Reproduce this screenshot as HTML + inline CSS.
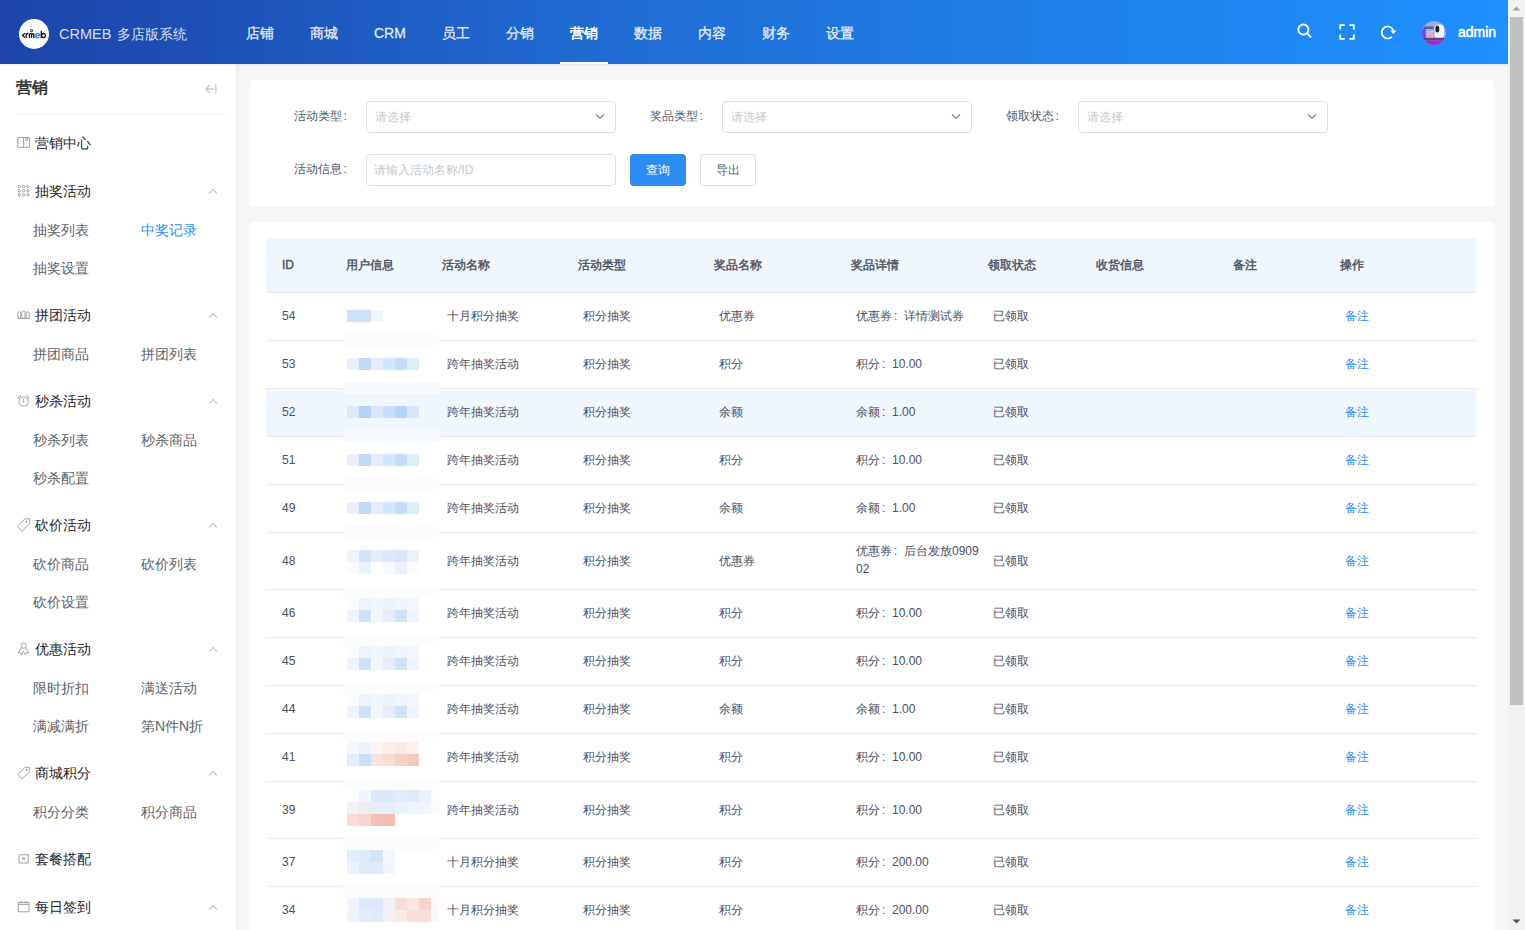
<!DOCTYPE html><html><head><meta charset="utf-8"><title>CRMEB</title><style>
*{margin:0;padding:0;box-sizing:border-box}
html,body{width:1525px;height:930px;overflow:hidden;background:#f5f6f8;font-family:"Liberation Sans", sans-serif}
.t{position:absolute;white-space:nowrap}
.a{position:absolute}
</style></head><body>
<div class="a" style="left:0;top:0;width:1508px;height:64px;background:linear-gradient(90deg,#1d45ab 0px,#1d50b6 200px,#206ad2 580px,#1f7ee6 1000px,#1e90ff 1508px)"></div>
<div class="a" style="left:19px;top:19px;width:30px;height:30px;border-radius:50%;background:#fff"></div>
<svg class="a" style="left:0;top:0" width="60" height="60" viewBox="0 0 60 60"><g fill="none" stroke="#111" stroke-width="1.3"><path d="M24.9 33.3L22.5 35.4 24.9 37.5"/><path d="M26.2 37.9V33.2M26.2 35Q26.9 33.3 28.3 33.5"/><path d="M29.4 37.9V33.2M29.4 34.3Q31.6 32.6 31.6 34.8V37.9M31.6 34.8Q33.7 32.6 33.8 34.8V37.9"/><circle cx="31.5" cy="30.6" r="1.1" stroke-width="1"/><path d="M35.9 35.5H39.7A2.1 2.2 0 1 0 39.1 37.1" stroke="#2d8cf0"/><path d="M41.3 30.8V37.9"/><ellipse cx="43.5" cy="35.6" rx="2" ry="2.1"/></g></svg>
<div class="t" style="left:59px;top:23.0px;font-size:14px;line-height:22px;color:rgba(255,255,255,0.82);font-weight:normal;"><span style="font-size:14.5px;margin-right:2px">CRMEB</span> 多店版系统</div>
<div class="t" style="left:246px;top:22.0px;font-size:14px;line-height:22px;color:rgba(255,255,255,0.8);font-weight:normal;-webkit-text-stroke:0.35px rgba(255,255,255,0.8)">店铺</div>
<div class="t" style="left:310px;top:22.0px;font-size:14px;line-height:22px;color:rgba(255,255,255,0.8);font-weight:normal;-webkit-text-stroke:0.35px rgba(255,255,255,0.8)">商城</div>
<div class="t" style="left:374px;top:22.0px;font-size:14px;line-height:22px;color:rgba(255,255,255,0.8);font-weight:normal;-webkit-text-stroke:0.35px rgba(255,255,255,0.8)">CRM</div>
<div class="t" style="left:442px;top:22.0px;font-size:14px;line-height:22px;color:rgba(255,255,255,0.8);font-weight:normal;-webkit-text-stroke:0.35px rgba(255,255,255,0.8)">员工</div>
<div class="t" style="left:506px;top:22.0px;font-size:14px;line-height:22px;color:rgba(255,255,255,0.8);font-weight:normal;-webkit-text-stroke:0.35px rgba(255,255,255,0.8)">分销</div>
<div class="t" style="left:570px;top:22.0px;font-size:14px;line-height:22px;color:#fff;font-weight:normal;-webkit-text-stroke:0.45px #fff">营销</div>
<div class="t" style="left:634px;top:22.0px;font-size:14px;line-height:22px;color:rgba(255,255,255,0.8);font-weight:normal;-webkit-text-stroke:0.35px rgba(255,255,255,0.8)">数据</div>
<div class="t" style="left:698px;top:22.0px;font-size:14px;line-height:22px;color:rgba(255,255,255,0.8);font-weight:normal;-webkit-text-stroke:0.35px rgba(255,255,255,0.8)">内容</div>
<div class="t" style="left:762px;top:22.0px;font-size:14px;line-height:22px;color:rgba(255,255,255,0.8);font-weight:normal;-webkit-text-stroke:0.35px rgba(255,255,255,0.8)">财务</div>
<div class="t" style="left:826px;top:22.0px;font-size:14px;line-height:22px;color:rgba(255,255,255,0.8);font-weight:normal;-webkit-text-stroke:0.35px rgba(255,255,255,0.8)">设置</div>
<div class="a" style="left:560px;top:62px;width:48px;height:2px;background:#fff"></div>
<svg class="a" style="left:1296px;top:23px" width="18" height="18" viewBox="0 0 18 18"><circle cx="7.4" cy="6.6" r="5.1" fill="none" stroke="#fff" stroke-width="1.8"/><line x1="11" y1="10.3" x2="14.6" y2="13.9" stroke="#fff" stroke-width="2" stroke-linecap="round"/></svg>
<svg class="a" style="left:1338px;top:23px" width="18" height="18" viewBox="0 0 18 18"><path d="M2.2 6.5V2.2h4.5M11.3 2.2h4.5v4.5M15.8 11.5v4.3h-4.5M6.7 15.8H2.2v-4.3" fill="none" stroke="#fff" stroke-width="1.8"/></svg>
<svg class="a" style="left:1379px;top:24px" width="18" height="18" viewBox="0 0 18 18"><path d="M14.4 6.6A6 6 0 1 0 12.9 12.8" fill="none" stroke="#fff" stroke-width="1.7"/><path d="M11.4 6.6h6L14.4 10z" fill="#fff"/></svg>
<svg class="a" style="left:1422px;top:21px" width="24" height="24" viewBox="0 0 24 24"><defs><clipPath id="avc"><circle cx="12" cy="12" r="12"/></clipPath></defs><g clip-path="url(#avc)"><rect width="24" height="24" fill="#9cace8"/><rect x="0" y="7" width="3.8" height="10" fill="#7848e6"/><rect x="2" y="5.5" width="9.5" height="2.5" fill="#3c3c78" opacity="0.7"/><rect x="4.5" y="10" width="7" height="1.6" fill="#f2b4d2"/><rect x="4.5" y="12.6" width="7" height="1.6" fill="#f2b4d2"/><rect x="4.5" y="15.2" width="7" height="1.4" fill="#f2b4d2"/><rect x="12.5" y="3.5" width="9.5" height="14" rx="4" fill="#f6f6fa"/><ellipse cx="15.3" cy="8" rx="2" ry="3.5" fill="#222"/><rect x="0" y="16.8" width="24" height="2.4" fill="#50506a"/><rect x="0" y="19.2" width="24" height="5" fill="#a626c8"/></g></svg>
<div class="t" style="left:1458px;top:21.0px;font-size:14px;line-height:22px;color:#fff;font-weight:normal;-webkit-text-stroke:0.5px #fff">admin</div>
<div class="a" style="left:0;top:64px;width:236px;height:866px;background:#fff"></div>
<div class="a" style="left:236px;top:64px;width:6px;height:866px;background:linear-gradient(90deg,#eceef1,#f5f6f9)"></div>
<div class="a" style="left:0;top:64px;width:1508px;height:3px;background:linear-gradient(180deg,rgba(0,0,0,0.06),rgba(0,0,0,0))"></div>
<div class="t" style="left:16px;top:76.0px;font-size:16px;line-height:24px;color:#303133;font-weight:normal;-webkit-text-stroke:0.55px #303133">营销</div>
<svg class="a" style="left:203px;top:82px" width="15" height="14" viewBox="0 0 15 14"><path d="M6.5 3.2L2.8 7l3.7 3.8M2.8 7h8M12.8 2.5v9" fill="none" stroke="#c3c7cf" stroke-width="1.3"/></svg>
<div class="a" style="left:16px;top:114px;width:210px;height:1px;background:#eef0f4"></div>
<div class="t" style="left:35px;top:132.0px;font-size:14px;line-height:22px;color:#1f2329;font-weight:normal;">营销中心</div>
<svg class="a" style="left:16px;top:135px" width="16" height="16" viewBox="0 0 16 16"><path d="M1.8 2.5h11.6v9.8H1.8z M7.6 2.5v9.8 M9.8 2.5v3.2l0.9-0.8 0.9 0.8V2.5" fill="none" stroke="#92969e" stroke-width="0.9"/></svg>
<div class="t" style="left:35px;top:180.0px;font-size:14px;line-height:22px;color:#1f2329;font-weight:normal;">抽奖活动</div>
<svg class="a" style="left:16px;top:183px" width="16" height="16" viewBox="0 0 16 16"><circle cx="3.2" cy="3.6" r="1.2" fill="none" stroke="#92969e" stroke-width="0.9"/><circle cx="7.55" cy="3.6" r="1.2" fill="none" stroke="#92969e" stroke-width="0.9"/><circle cx="11.899999999999999" cy="3.6" r="1.2" fill="none" stroke="#92969e" stroke-width="0.9"/><circle cx="3.2" cy="7.699999999999999" r="1.2" fill="none" stroke="#92969e" stroke-width="0.9"/><circle cx="7.55" cy="7.699999999999999" r="1.2" fill="none" stroke="#92969e" stroke-width="0.9"/><circle cx="11.899999999999999" cy="7.699999999999999" r="1.2" fill="none" stroke="#92969e" stroke-width="0.9"/><circle cx="3.2" cy="11.799999999999999" r="1.2" fill="none" stroke="#92969e" stroke-width="0.9"/><circle cx="7.55" cy="11.799999999999999" r="1.2" fill="none" stroke="#92969e" stroke-width="0.9"/><circle cx="11.899999999999999" cy="11.799999999999999" r="1.2" fill="none" stroke="#92969e" stroke-width="0.9"/></svg>
<svg class="a" style="left:208px;top:188px" width="10" height="7" viewBox="0 0 10 7"><path d="M1 5.5L5 1.5 9 5.5" fill="none" stroke="#c5c8ce" stroke-width="1.1"/></svg>
<div class="t" style="left:35px;top:304.0px;font-size:14px;line-height:22px;color:#1f2329;font-weight:normal;">拼团活动</div>
<svg class="a" style="left:16px;top:307px" width="16" height="16" viewBox="0 0 16 16"><rect x="1.8" y="4.8" width="3" height="6.6" rx="1.5" fill="none" stroke="#92969e" stroke-width="0.9"/><rect x="5.9" y="3.9" width="3.2" height="7.5" rx="1.6" fill="none" stroke="#92969e" stroke-width="0.9"/><rect x="10.2" y="4.8" width="3" height="6.6" rx="1.5" fill="none" stroke="#92969e" stroke-width="0.9"/><path d="M1.5 11.6H13.5" fill="none" stroke="#92969e" stroke-width="0.9"/></svg>
<svg class="a" style="left:208px;top:312px" width="10" height="7" viewBox="0 0 10 7"><path d="M1 5.5L5 1.5 9 5.5" fill="none" stroke="#c5c8ce" stroke-width="1.1"/></svg>
<div class="t" style="left:35px;top:390.0px;font-size:14px;line-height:22px;color:#1f2329;font-weight:normal;">秒杀活动</div>
<svg class="a" style="left:16px;top:393px" width="16" height="16" viewBox="0 0 16 16"><rect x="3" y="4.2" width="9.2" height="8.8" rx="3.5" fill="none" stroke="#92969e" stroke-width="0.9"/><path d="M2.2 5.6Q2.2 2.6 5 2.6 M13 5.6Q13 2.6 10.2 2.6 M7.6 5.8V9.6" fill="none" stroke="#92969e" stroke-width="0.9"/></svg>
<svg class="a" style="left:208px;top:398px" width="10" height="7" viewBox="0 0 10 7"><path d="M1 5.5L5 1.5 9 5.5" fill="none" stroke="#c5c8ce" stroke-width="1.1"/></svg>
<div class="t" style="left:35px;top:514.0px;font-size:14px;line-height:22px;color:#1f2329;font-weight:normal;">砍价活动</div>
<svg class="a" style="left:16px;top:517px" width="16" height="16" viewBox="0 0 16 16"><path d="M1.3 9.4L8.9 1.8H13.8V6.6L6.2 14.2Z" fill="none" stroke="#92969e" stroke-width="0.9"/><circle cx="10.4" cy="4.6" r="0.7" fill="none" stroke="#92969e" stroke-width="0.9"/></svg>
<svg class="a" style="left:208px;top:522px" width="10" height="7" viewBox="0 0 10 7"><path d="M1 5.5L5 1.5 9 5.5" fill="none" stroke="#c5c8ce" stroke-width="1.1"/></svg>
<div class="t" style="left:35px;top:638.0px;font-size:14px;line-height:22px;color:#1f2329;font-weight:normal;">优惠活动</div>
<svg class="a" style="left:16px;top:641px" width="16" height="16" viewBox="0 0 16 16"><circle cx="7.5" cy="4.6" r="2.7" fill="none" stroke="#92969e" stroke-width="0.9"/><path d="M5.4 6.8L2.3 11.5H4.6L5.6 13.8L7.5 10.3L9.4 13.8L10.4 11.5H12.7L9.6 6.8" fill="none" stroke="#92969e" stroke-width="0.9"/></svg>
<svg class="a" style="left:208px;top:646px" width="10" height="7" viewBox="0 0 10 7"><path d="M1 5.5L5 1.5 9 5.5" fill="none" stroke="#c5c8ce" stroke-width="1.1"/></svg>
<div class="t" style="left:35px;top:762.0px;font-size:14px;line-height:22px;color:#1f2329;font-weight:normal;">商城积分</div>
<svg class="a" style="left:16px;top:765px" width="16" height="16" viewBox="0 0 16 16"><path d="M1.8 9.6L9.2 2.2H13.6V6.6L6.2 14Z" fill="none" stroke="#92969e" stroke-width="0.9"/><circle cx="10.6" cy="4.9" r="0.7" fill="none" stroke="#92969e" stroke-width="0.9"/></svg>
<svg class="a" style="left:208px;top:770px" width="10" height="7" viewBox="0 0 10 7"><path d="M1 5.5L5 1.5 9 5.5" fill="none" stroke="#c5c8ce" stroke-width="1.1"/></svg>
<div class="t" style="left:35px;top:848.0px;font-size:14px;line-height:22px;color:#1f2329;font-weight:normal;">套餐搭配</div>
<svg class="a" style="left:16px;top:851px" width="16" height="16" viewBox="0 0 16 16"><path d="M3 3.8h9.2v8.2H3z" fill="none" stroke="#92969e" stroke-width="0.9"/><rect x="6" y="6.6" width="3.2" height="1.8" fill="#92969e"/></svg>
<div class="t" style="left:35px;top:896.0px;font-size:14px;line-height:22px;color:#1f2329;font-weight:normal;">每日签到</div>
<svg class="a" style="left:16px;top:899px" width="16" height="16" viewBox="0 0 16 16"><path d="M2.3 3.3h10.7v9.5H2.3z M2.3 5.4h10.7 M5 2v2.5 M10.3 2v2.5" fill="none" stroke="#92969e" stroke-width="0.9"/></svg>
<svg class="a" style="left:208px;top:904px" width="10" height="7" viewBox="0 0 10 7"><path d="M1 5.5L5 1.5 9 5.5" fill="none" stroke="#c5c8ce" stroke-width="1.1"/></svg>
<div class="t" style="left:33px;top:219.0px;font-size:14px;line-height:22px;color:#606266;font-weight:normal;">抽奖列表</div>
<div class="t" style="left:141px;top:219.0px;font-size:14px;line-height:22px;color:#2d8cf0;font-weight:normal;">中奖记录</div>
<div class="t" style="left:33px;top:257.0px;font-size:14px;line-height:22px;color:#606266;font-weight:normal;">抽奖设置</div>
<div class="t" style="left:33px;top:343.0px;font-size:14px;line-height:22px;color:#606266;font-weight:normal;">拼团商品</div>
<div class="t" style="left:141px;top:343.0px;font-size:14px;line-height:22px;color:#606266;font-weight:normal;">拼团列表</div>
<div class="t" style="left:33px;top:429.0px;font-size:14px;line-height:22px;color:#606266;font-weight:normal;">秒杀列表</div>
<div class="t" style="left:141px;top:429.0px;font-size:14px;line-height:22px;color:#606266;font-weight:normal;">秒杀商品</div>
<div class="t" style="left:33px;top:467.0px;font-size:14px;line-height:22px;color:#606266;font-weight:normal;">秒杀配置</div>
<div class="t" style="left:33px;top:553.0px;font-size:14px;line-height:22px;color:#606266;font-weight:normal;">砍价商品</div>
<div class="t" style="left:141px;top:553.0px;font-size:14px;line-height:22px;color:#606266;font-weight:normal;">砍价列表</div>
<div class="t" style="left:33px;top:591.0px;font-size:14px;line-height:22px;color:#606266;font-weight:normal;">砍价设置</div>
<div class="t" style="left:33px;top:677.0px;font-size:14px;line-height:22px;color:#606266;font-weight:normal;">限时折扣</div>
<div class="t" style="left:141px;top:677.0px;font-size:14px;line-height:22px;color:#606266;font-weight:normal;">满送活动</div>
<div class="t" style="left:33px;top:715.0px;font-size:14px;line-height:22px;color:#606266;font-weight:normal;">满减满折</div>
<div class="t" style="left:141px;top:715.0px;font-size:14px;line-height:22px;color:#606266;font-weight:normal;">第N件N折</div>
<div class="t" style="left:33px;top:801.0px;font-size:14px;line-height:22px;color:#606266;font-weight:normal;">积分分类</div>
<div class="t" style="left:141px;top:801.0px;font-size:14px;line-height:22px;color:#606266;font-weight:normal;">积分商品</div>
<div class="a" style="left:250px;top:80px;width:1244px;height:126px;background:#fff;border-radius:4px"></div>
<div class="t" style="left:294px;top:105.5px;font-size:12px;line-height:20px;color:#515a6e;font-weight:normal;">活动类型<span style="margin-left:1.5px">:</span></div>
<div class="a" style="left:366px;top:101px;width:250px;height:32px;border:1px solid #dcdee2;border-radius:4px"></div>
<div class="t" style="left:375px;top:106.5px;font-size:12px;line-height:20px;color:#c5c8ce;font-weight:normal;">请选择</div>
<svg class="a" style="left:595px;top:113px" width="10" height="7" viewBox="0 0 10 7"><path d="M1 1.5L5 5.5 9 1.5" fill="none" stroke="#808695" stroke-width="1.2"/></svg>
<div class="t" style="left:650px;top:105.5px;font-size:12px;line-height:20px;color:#515a6e;font-weight:normal;">奖品类型<span style="margin-left:1.5px">:</span></div>
<div class="a" style="left:722px;top:101px;width:250px;height:32px;border:1px solid #dcdee2;border-radius:4px"></div>
<div class="t" style="left:731px;top:106.5px;font-size:12px;line-height:20px;color:#c5c8ce;font-weight:normal;">请选择</div>
<svg class="a" style="left:951px;top:113px" width="10" height="7" viewBox="0 0 10 7"><path d="M1 1.5L5 5.5 9 1.5" fill="none" stroke="#808695" stroke-width="1.2"/></svg>
<div class="t" style="left:1006px;top:105.5px;font-size:12px;line-height:20px;color:#515a6e;font-weight:normal;">领取状态<span style="margin-left:1.5px">:</span></div>
<div class="a" style="left:1078px;top:101px;width:250px;height:32px;border:1px solid #dcdee2;border-radius:4px"></div>
<div class="t" style="left:1087px;top:106.5px;font-size:12px;line-height:20px;color:#c5c8ce;font-weight:normal;">请选择</div>
<svg class="a" style="left:1307px;top:113px" width="10" height="7" viewBox="0 0 10 7"><path d="M1 1.5L5 5.5 9 1.5" fill="none" stroke="#808695" stroke-width="1.2"/></svg>
<div class="t" style="left:294px;top:158.5px;font-size:12px;line-height:20px;color:#515a6e;font-weight:normal;">活动信息<span style="margin-left:1.5px">:</span></div>
<div class="a" style="left:366px;top:154px;width:250px;height:32px;border:1px solid #dcdee2;border-radius:4px"></div>
<div class="t" style="left:374px;top:159.5px;font-size:12px;line-height:20px;color:#c5c8ce;font-weight:normal;">请输入活动名称/ID</div>
<div class="a" style="left:630px;top:154px;width:56px;height:32px;background:#2d8cf0;border-radius:4px"></div>
<div class="t" style="left:646px;top:159.5px;font-size:12px;line-height:20px;color:#fff;font-weight:normal;">查询</div>
<div class="a" style="left:700px;top:154px;width:56px;height:32px;border:1px solid #dcdee2;border-radius:4px;background:#fff"></div>
<div class="t" style="left:716px;top:159.5px;font-size:12px;line-height:20px;color:#515a6e;font-weight:normal;">导出</div>
<div class="a" style="left:250px;top:222px;width:1244px;height:720px;background:#fff;border-radius:4px"></div>
<div class="a" style="left:266px;top:238px;width:1211px;height:54px;background:#f0f6fe"></div>
<div class="a" style="left:266px;top:292px;width:1211px;height:1px;background:#e8eaec"></div>
<div class="t" style="left:282px;top:254.5px;font-size:12px;line-height:20px;color:#4a5061;font-weight:normal;-webkit-text-stroke:0.4px #4a5061">ID</div>
<div class="t" style="left:346px;top:254.5px;font-size:12px;line-height:20px;color:#4a5061;font-weight:normal;-webkit-text-stroke:0.4px #4a5061">用户信息</div>
<div class="t" style="left:442px;top:254.5px;font-size:12px;line-height:20px;color:#4a5061;font-weight:normal;-webkit-text-stroke:0.4px #4a5061">活动名称</div>
<div class="t" style="left:578px;top:254.5px;font-size:12px;line-height:20px;color:#4a5061;font-weight:normal;-webkit-text-stroke:0.4px #4a5061">活动类型</div>
<div class="t" style="left:714px;top:254.5px;font-size:12px;line-height:20px;color:#4a5061;font-weight:normal;-webkit-text-stroke:0.4px #4a5061">奖品名称</div>
<div class="t" style="left:851px;top:254.5px;font-size:12px;line-height:20px;color:#4a5061;font-weight:normal;-webkit-text-stroke:0.4px #4a5061">奖品详情</div>
<div class="t" style="left:988px;top:254.5px;font-size:12px;line-height:20px;color:#4a5061;font-weight:normal;-webkit-text-stroke:0.4px #4a5061">领取状态</div>
<div class="t" style="left:1096px;top:254.5px;font-size:12px;line-height:20px;color:#4a5061;font-weight:normal;-webkit-text-stroke:0.4px #4a5061">收货信息</div>
<div class="t" style="left:1233px;top:254.5px;font-size:12px;line-height:20px;color:#4a5061;font-weight:normal;-webkit-text-stroke:0.4px #4a5061">备注</div>
<div class="t" style="left:1340px;top:254.5px;font-size:12px;line-height:20px;color:#4a5061;font-weight:normal;-webkit-text-stroke:0.4px #4a5061">操作</div>
<div class="a" style="left:266px;top:340px;width:1211px;height:1px;background:#e8eaec"></div>
<div class="a" style="left:347px;top:310px;width:12px;height:12px;background:#d0e2f8"></div>
<div class="a" style="left:359px;top:310px;width:12px;height:12px;background:#d0e0f6"></div>
<div class="a" style="left:371px;top:310px;width:12px;height:12px;background:#eef5fd"></div>
<div class="t" style="left:282px;top:306.0px;font-size:12px;line-height:20px;color:#495166;font-weight:normal;">54</div>
<div class="t" style="left:447px;top:306.0px;font-size:12px;line-height:20px;color:#495166;font-weight:normal;">十月积分抽奖</div>
<div class="t" style="left:583px;top:306.0px;font-size:12px;line-height:20px;color:#495166;font-weight:normal;">积分抽奖</div>
<div class="t" style="left:719px;top:306.0px;font-size:12px;line-height:20px;color:#495166;font-weight:normal;">优惠券</div>
<div class="t" style="left:856px;top:306.0px;font-size:12px;line-height:20px;color:#495166;font-weight:normal;">优惠券<span style="display:inline-block;width:12px;padding-left:2px">:</span>详情测试券</div>
<div class="t" style="left:993px;top:306.0px;font-size:12px;line-height:20px;color:#495166;font-weight:normal;">已领取</div>
<div class="t" style="left:1345px;top:306.0px;font-size:12px;line-height:20px;color:#2d8cf0;font-weight:normal;">备注</div>
<div class="a" style="left:266px;top:388px;width:1211px;height:1px;background:#e8eaec"></div>
<div class="a" style="left:347px;top:358px;width:12px;height:12px;background:#e9f0fc"></div>
<div class="a" style="left:359px;top:358px;width:12px;height:12px;background:#c0daf6"></div>
<div class="a" style="left:371px;top:358px;width:12px;height:12px;background:#e3ecfa"></div>
<div class="a" style="left:383px;top:358px;width:12px;height:12px;background:#d5e4f8"></div>
<div class="a" style="left:395px;top:358px;width:12px;height:12px;background:#c3dcf8"></div>
<div class="a" style="left:407px;top:358px;width:12px;height:12px;background:#e0edfa"></div>
<div class="t" style="left:282px;top:354.0px;font-size:12px;line-height:20px;color:#495166;font-weight:normal;">53</div>
<div class="t" style="left:447px;top:354.0px;font-size:12px;line-height:20px;color:#495166;font-weight:normal;">跨年抽奖活动</div>
<div class="t" style="left:583px;top:354.0px;font-size:12px;line-height:20px;color:#495166;font-weight:normal;">积分抽奖</div>
<div class="t" style="left:719px;top:354.0px;font-size:12px;line-height:20px;color:#495166;font-weight:normal;">积分</div>
<div class="t" style="left:856px;top:354.0px;font-size:12px;line-height:20px;color:#495166;font-weight:normal;">积分<span style="display:inline-block;width:12px;padding-left:2px">:</span>10.00</div>
<div class="t" style="left:993px;top:354.0px;font-size:12px;line-height:20px;color:#495166;font-weight:normal;">已领取</div>
<div class="t" style="left:1345px;top:354.0px;font-size:12px;line-height:20px;color:#2d8cf0;font-weight:normal;">备注</div>
<div class="a" style="left:266px;top:389px;width:1211px;height:47px;background:#f0f6fe"></div>
<div class="a" style="left:266px;top:436px;width:1211px;height:1px;background:#e8eaec"></div>
<div class="a" style="left:347px;top:406px;width:12px;height:12px;background:#dde9fb"></div>
<div class="a" style="left:359px;top:406px;width:12px;height:12px;background:#b5d3f8"></div>
<div class="a" style="left:371px;top:406px;width:12px;height:12px;background:#dae7fb"></div>
<div class="a" style="left:383px;top:406px;width:12px;height:12px;background:#c8ddf9"></div>
<div class="a" style="left:395px;top:406px;width:12px;height:12px;background:#b5d4f9"></div>
<div class="a" style="left:407px;top:406px;width:12px;height:12px;background:#d5e5fa"></div>
<div class="t" style="left:282px;top:402.0px;font-size:12px;line-height:20px;color:#495166;font-weight:normal;">52</div>
<div class="t" style="left:447px;top:402.0px;font-size:12px;line-height:20px;color:#495166;font-weight:normal;">跨年抽奖活动</div>
<div class="t" style="left:583px;top:402.0px;font-size:12px;line-height:20px;color:#495166;font-weight:normal;">积分抽奖</div>
<div class="t" style="left:719px;top:402.0px;font-size:12px;line-height:20px;color:#495166;font-weight:normal;">余额</div>
<div class="t" style="left:856px;top:402.0px;font-size:12px;line-height:20px;color:#495166;font-weight:normal;">余额<span style="display:inline-block;width:12px;padding-left:2px">:</span>1.00</div>
<div class="t" style="left:993px;top:402.0px;font-size:12px;line-height:20px;color:#495166;font-weight:normal;">已领取</div>
<div class="t" style="left:1345px;top:402.0px;font-size:12px;line-height:20px;color:#2d8cf0;font-weight:normal;">备注</div>
<div class="a" style="left:266px;top:484px;width:1211px;height:1px;background:#e8eaec"></div>
<div class="a" style="left:347px;top:454px;width:12px;height:12px;background:#e9f0fc"></div>
<div class="a" style="left:359px;top:454px;width:12px;height:12px;background:#c0daf6"></div>
<div class="a" style="left:371px;top:454px;width:12px;height:12px;background:#e3ecfa"></div>
<div class="a" style="left:383px;top:454px;width:12px;height:12px;background:#d5e4f8"></div>
<div class="a" style="left:395px;top:454px;width:12px;height:12px;background:#c3dcf8"></div>
<div class="a" style="left:407px;top:454px;width:12px;height:12px;background:#e0edfa"></div>
<div class="t" style="left:282px;top:450.0px;font-size:12px;line-height:20px;color:#495166;font-weight:normal;">51</div>
<div class="t" style="left:447px;top:450.0px;font-size:12px;line-height:20px;color:#495166;font-weight:normal;">跨年抽奖活动</div>
<div class="t" style="left:583px;top:450.0px;font-size:12px;line-height:20px;color:#495166;font-weight:normal;">积分抽奖</div>
<div class="t" style="left:719px;top:450.0px;font-size:12px;line-height:20px;color:#495166;font-weight:normal;">积分</div>
<div class="t" style="left:856px;top:450.0px;font-size:12px;line-height:20px;color:#495166;font-weight:normal;">积分<span style="display:inline-block;width:12px;padding-left:2px">:</span>10.00</div>
<div class="t" style="left:993px;top:450.0px;font-size:12px;line-height:20px;color:#495166;font-weight:normal;">已领取</div>
<div class="t" style="left:1345px;top:450.0px;font-size:12px;line-height:20px;color:#2d8cf0;font-weight:normal;">备注</div>
<div class="a" style="left:266px;top:532px;width:1211px;height:1px;background:#e8eaec"></div>
<div class="a" style="left:347px;top:502px;width:12px;height:12px;background:#e9f0fc"></div>
<div class="a" style="left:359px;top:502px;width:12px;height:12px;background:#c0daf6"></div>
<div class="a" style="left:371px;top:502px;width:12px;height:12px;background:#e3ecfa"></div>
<div class="a" style="left:383px;top:502px;width:12px;height:12px;background:#d5e4f8"></div>
<div class="a" style="left:395px;top:502px;width:12px;height:12px;background:#c3dcf8"></div>
<div class="a" style="left:407px;top:502px;width:12px;height:12px;background:#e0edfa"></div>
<div class="t" style="left:282px;top:498.0px;font-size:12px;line-height:20px;color:#495166;font-weight:normal;">49</div>
<div class="t" style="left:447px;top:498.0px;font-size:12px;line-height:20px;color:#495166;font-weight:normal;">跨年抽奖活动</div>
<div class="t" style="left:583px;top:498.0px;font-size:12px;line-height:20px;color:#495166;font-weight:normal;">积分抽奖</div>
<div class="t" style="left:719px;top:498.0px;font-size:12px;line-height:20px;color:#495166;font-weight:normal;">余额</div>
<div class="t" style="left:856px;top:498.0px;font-size:12px;line-height:20px;color:#495166;font-weight:normal;">余额<span style="display:inline-block;width:12px;padding-left:2px">:</span>1.00</div>
<div class="t" style="left:993px;top:498.0px;font-size:12px;line-height:20px;color:#495166;font-weight:normal;">已领取</div>
<div class="t" style="left:1345px;top:498.0px;font-size:12px;line-height:20px;color:#2d8cf0;font-weight:normal;">备注</div>
<div class="a" style="left:266px;top:589px;width:1211px;height:1px;background:#e8eaec"></div>
<div class="a" style="left:347px;top:550px;width:12px;height:12px;background:#eef4fd"></div>
<div class="a" style="left:359px;top:550px;width:12px;height:12px;background:#d3e4f9"></div>
<div class="a" style="left:371px;top:550px;width:12px;height:12px;background:#e6edfa"></div>
<div class="a" style="left:383px;top:550px;width:12px;height:12px;background:#dde8f8"></div>
<div class="a" style="left:395px;top:550px;width:12px;height:12px;background:#d8e7f8"></div>
<div class="a" style="left:407px;top:550px;width:12px;height:12px;background:#ebf2fc"></div>
<div class="a" style="left:347px;top:562px;width:12px;height:12px;background:#f8fafe"></div>
<div class="a" style="left:359px;top:562px;width:12px;height:12px;background:#e9f1fc"></div>
<div class="a" style="left:371px;top:562px;width:12px;height:12px;background:#ffffff"></div>
<div class="a" style="left:383px;top:562px;width:12px;height:12px;background:#f6f9fe"></div>
<div class="a" style="left:395px;top:562px;width:12px;height:12px;background:#e9f1fc"></div>
<div class="a" style="left:407px;top:562px;width:12px;height:12px;background:#fafbfe"></div>
<div class="t" style="left:282px;top:550.5px;font-size:12px;line-height:20px;color:#495166;font-weight:normal;">48</div>
<div class="t" style="left:447px;top:550.5px;font-size:12px;line-height:20px;color:#495166;font-weight:normal;">跨年抽奖活动</div>
<div class="t" style="left:583px;top:550.5px;font-size:12px;line-height:20px;color:#495166;font-weight:normal;">积分抽奖</div>
<div class="t" style="left:719px;top:550.5px;font-size:12px;line-height:20px;color:#495166;font-weight:normal;">优惠券</div>
<div class="t" style="left:856px;top:542.0px;width:127px;white-space:normal;word-break:break-all;font-size:12px;line-height:18px;color:#495166">优惠券<span style="display:inline-block;width:12px;padding-left:2px">:</span>后台发放090902</div>
<div class="t" style="left:993px;top:550.5px;font-size:12px;line-height:20px;color:#495166;font-weight:normal;">已领取</div>
<div class="t" style="left:1345px;top:550.5px;font-size:12px;line-height:20px;color:#2d8cf0;font-weight:normal;">备注</div>
<div class="a" style="left:266px;top:637px;width:1211px;height:1px;background:#e8eaec"></div>
<div class="a" style="left:347px;top:598px;width:12px;height:12px;background:#f9fbfe"></div>
<div class="a" style="left:359px;top:598px;width:12px;height:12px;background:#edf4fd"></div>
<div class="a" style="left:371px;top:598px;width:12px;height:12px;background:#f1f6fd"></div>
<div class="a" style="left:383px;top:598px;width:12px;height:12px;background:#edf3fc"></div>
<div class="a" style="left:395px;top:598px;width:12px;height:12px;background:#eff4fd"></div>
<div class="a" style="left:407px;top:598px;width:12px;height:12px;background:#f3f8fd"></div>
<div class="a" style="left:347px;top:610px;width:12px;height:12px;background:#eef3fd"></div>
<div class="a" style="left:359px;top:610px;width:12px;height:12px;background:#d0e2f8"></div>
<div class="a" style="left:371px;top:610px;width:12px;height:12px;background:#f2f6fd"></div>
<div class="a" style="left:383px;top:610px;width:12px;height:12px;background:#e6edfa"></div>
<div class="a" style="left:395px;top:610px;width:12px;height:12px;background:#d0e2f8"></div>
<div class="a" style="left:407px;top:610px;width:12px;height:12px;background:#eef3fd"></div>
<div class="t" style="left:282px;top:603.0px;font-size:12px;line-height:20px;color:#495166;font-weight:normal;">46</div>
<div class="t" style="left:447px;top:603.0px;font-size:12px;line-height:20px;color:#495166;font-weight:normal;">跨年抽奖活动</div>
<div class="t" style="left:583px;top:603.0px;font-size:12px;line-height:20px;color:#495166;font-weight:normal;">积分抽奖</div>
<div class="t" style="left:719px;top:603.0px;font-size:12px;line-height:20px;color:#495166;font-weight:normal;">积分</div>
<div class="t" style="left:856px;top:603.0px;font-size:12px;line-height:20px;color:#495166;font-weight:normal;">积分<span style="display:inline-block;width:12px;padding-left:2px">:</span>10.00</div>
<div class="t" style="left:993px;top:603.0px;font-size:12px;line-height:20px;color:#495166;font-weight:normal;">已领取</div>
<div class="t" style="left:1345px;top:603.0px;font-size:12px;line-height:20px;color:#2d8cf0;font-weight:normal;">备注</div>
<div class="a" style="left:266px;top:685px;width:1211px;height:1px;background:#e8eaec"></div>
<div class="a" style="left:347px;top:646px;width:12px;height:12px;background:#f9fbfe"></div>
<div class="a" style="left:359px;top:646px;width:12px;height:12px;background:#edf4fd"></div>
<div class="a" style="left:371px;top:646px;width:12px;height:12px;background:#f1f6fd"></div>
<div class="a" style="left:383px;top:646px;width:12px;height:12px;background:#edf3fc"></div>
<div class="a" style="left:395px;top:646px;width:12px;height:12px;background:#eff4fd"></div>
<div class="a" style="left:407px;top:646px;width:12px;height:12px;background:#f3f8fd"></div>
<div class="a" style="left:347px;top:658px;width:12px;height:12px;background:#eef3fd"></div>
<div class="a" style="left:359px;top:658px;width:12px;height:12px;background:#d0e2f8"></div>
<div class="a" style="left:371px;top:658px;width:12px;height:12px;background:#f2f6fd"></div>
<div class="a" style="left:383px;top:658px;width:12px;height:12px;background:#e6edfa"></div>
<div class="a" style="left:395px;top:658px;width:12px;height:12px;background:#d0e2f8"></div>
<div class="a" style="left:407px;top:658px;width:12px;height:12px;background:#eef3fd"></div>
<div class="t" style="left:282px;top:651.0px;font-size:12px;line-height:20px;color:#495166;font-weight:normal;">45</div>
<div class="t" style="left:447px;top:651.0px;font-size:12px;line-height:20px;color:#495166;font-weight:normal;">跨年抽奖活动</div>
<div class="t" style="left:583px;top:651.0px;font-size:12px;line-height:20px;color:#495166;font-weight:normal;">积分抽奖</div>
<div class="t" style="left:719px;top:651.0px;font-size:12px;line-height:20px;color:#495166;font-weight:normal;">积分</div>
<div class="t" style="left:856px;top:651.0px;font-size:12px;line-height:20px;color:#495166;font-weight:normal;">积分<span style="display:inline-block;width:12px;padding-left:2px">:</span>10.00</div>
<div class="t" style="left:993px;top:651.0px;font-size:12px;line-height:20px;color:#495166;font-weight:normal;">已领取</div>
<div class="t" style="left:1345px;top:651.0px;font-size:12px;line-height:20px;color:#2d8cf0;font-weight:normal;">备注</div>
<div class="a" style="left:266px;top:733px;width:1211px;height:1px;background:#e8eaec"></div>
<div class="a" style="left:347px;top:694px;width:12px;height:12px;background:#f9fbfe"></div>
<div class="a" style="left:359px;top:694px;width:12px;height:12px;background:#edf4fd"></div>
<div class="a" style="left:371px;top:694px;width:12px;height:12px;background:#f1f6fd"></div>
<div class="a" style="left:383px;top:694px;width:12px;height:12px;background:#edf3fc"></div>
<div class="a" style="left:395px;top:694px;width:12px;height:12px;background:#eff4fd"></div>
<div class="a" style="left:407px;top:694px;width:12px;height:12px;background:#f3f8fd"></div>
<div class="a" style="left:347px;top:706px;width:12px;height:12px;background:#eef3fd"></div>
<div class="a" style="left:359px;top:706px;width:12px;height:12px;background:#d0e2f8"></div>
<div class="a" style="left:371px;top:706px;width:12px;height:12px;background:#f2f6fd"></div>
<div class="a" style="left:383px;top:706px;width:12px;height:12px;background:#e6edfa"></div>
<div class="a" style="left:395px;top:706px;width:12px;height:12px;background:#d0e2f8"></div>
<div class="a" style="left:407px;top:706px;width:12px;height:12px;background:#eef3fd"></div>
<div class="t" style="left:282px;top:699.0px;font-size:12px;line-height:20px;color:#495166;font-weight:normal;">44</div>
<div class="t" style="left:447px;top:699.0px;font-size:12px;line-height:20px;color:#495166;font-weight:normal;">跨年抽奖活动</div>
<div class="t" style="left:583px;top:699.0px;font-size:12px;line-height:20px;color:#495166;font-weight:normal;">积分抽奖</div>
<div class="t" style="left:719px;top:699.0px;font-size:12px;line-height:20px;color:#495166;font-weight:normal;">余额</div>
<div class="t" style="left:856px;top:699.0px;font-size:12px;line-height:20px;color:#495166;font-weight:normal;">余额<span style="display:inline-block;width:12px;padding-left:2px">:</span>1.00</div>
<div class="t" style="left:993px;top:699.0px;font-size:12px;line-height:20px;color:#495166;font-weight:normal;">已领取</div>
<div class="t" style="left:1345px;top:699.0px;font-size:12px;line-height:20px;color:#2d8cf0;font-weight:normal;">备注</div>
<div class="a" style="left:266px;top:781px;width:1211px;height:1px;background:#e8eaec"></div>
<div class="a" style="left:347px;top:742px;width:12px;height:12px;background:#f4f8fe"></div>
<div class="a" style="left:359px;top:742px;width:12px;height:12px;background:#ecf3fd"></div>
<div class="a" style="left:371px;top:742px;width:12px;height:12px;background:#fdf4f3"></div>
<div class="a" style="left:383px;top:742px;width:12px;height:12px;background:#fceeec"></div>
<div class="a" style="left:395px;top:742px;width:12px;height:12px;background:#fbe9e6"></div>
<div class="a" style="left:407px;top:742px;width:12px;height:12px;background:#fdf0ee"></div>
<div class="a" style="left:347px;top:754px;width:12px;height:12px;background:#e3ecfb"></div>
<div class="a" style="left:359px;top:754px;width:12px;height:12px;background:#c8def8"></div>
<div class="a" style="left:371px;top:754px;width:12px;height:12px;background:#f9e2dc"></div>
<div class="a" style="left:383px;top:754px;width:12px;height:12px;background:#f8dcd4"></div>
<div class="a" style="left:395px;top:754px;width:12px;height:12px;background:#f6d0c7"></div>
<div class="a" style="left:407px;top:754px;width:12px;height:12px;background:#f5c8bc"></div>
<div class="t" style="left:282px;top:747.0px;font-size:12px;line-height:20px;color:#495166;font-weight:normal;">41</div>
<div class="t" style="left:447px;top:747.0px;font-size:12px;line-height:20px;color:#495166;font-weight:normal;">跨年抽奖活动</div>
<div class="t" style="left:583px;top:747.0px;font-size:12px;line-height:20px;color:#495166;font-weight:normal;">积分抽奖</div>
<div class="t" style="left:719px;top:747.0px;font-size:12px;line-height:20px;color:#495166;font-weight:normal;">积分</div>
<div class="t" style="left:856px;top:747.0px;font-size:12px;line-height:20px;color:#495166;font-weight:normal;">积分<span style="display:inline-block;width:12px;padding-left:2px">:</span>10.00</div>
<div class="t" style="left:993px;top:747.0px;font-size:12px;line-height:20px;color:#495166;font-weight:normal;">已领取</div>
<div class="t" style="left:1345px;top:747.0px;font-size:12px;line-height:20px;color:#2d8cf0;font-weight:normal;">备注</div>
<div class="a" style="left:266px;top:838px;width:1211px;height:1px;background:#e8eaec"></div>
<div class="a" style="left:347px;top:790px;width:12px;height:12px;background:#ffffff"></div>
<div class="a" style="left:359px;top:790px;width:12px;height:12px;background:#f0f6fe"></div>
<div class="a" style="left:371px;top:790px;width:12px;height:12px;background:#dde9fa"></div>
<div class="a" style="left:383px;top:790px;width:12px;height:12px;background:#dde9fa"></div>
<div class="a" style="left:395px;top:790px;width:12px;height:12px;background:#e2edf9"></div>
<div class="a" style="left:407px;top:790px;width:12px;height:12px;background:#deeafb"></div>
<div class="a" style="left:419px;top:790px;width:12px;height:12px;background:#ebf1fc"></div>
<div class="a" style="left:431px;top:790px;width:8px;height:12px;background:#fdfdfe"></div>
<div class="a" style="left:347px;top:802px;width:12px;height:12px;background:#f2f2f4"></div>
<div class="a" style="left:359px;top:802px;width:12px;height:12px;background:#efecee"></div>
<div class="a" style="left:371px;top:802px;width:12px;height:12px;background:#e6eef9"></div>
<div class="a" style="left:383px;top:802px;width:12px;height:12px;background:#e6eefa"></div>
<div class="a" style="left:395px;top:802px;width:12px;height:12px;background:#e9f1fc"></div>
<div class="a" style="left:407px;top:802px;width:12px;height:12px;background:#eef5fd"></div>
<div class="a" style="left:419px;top:802px;width:12px;height:12px;background:#f1f5fc"></div>
<div class="a" style="left:431px;top:802px;width:8px;height:12px;background:#fafbfe"></div>
<div class="a" style="left:347px;top:814px;width:12px;height:12px;background:#fadcd6"></div>
<div class="a" style="left:359px;top:814px;width:12px;height:12px;background:#f9d5cd"></div>
<div class="a" style="left:371px;top:814px;width:12px;height:12px;background:#f7c0b4"></div>
<div class="a" style="left:383px;top:814px;width:12px;height:12px;background:#f6bcb0"></div>
<div class="t" style="left:282px;top:799.5px;font-size:12px;line-height:20px;color:#495166;font-weight:normal;">39</div>
<div class="t" style="left:447px;top:799.5px;font-size:12px;line-height:20px;color:#495166;font-weight:normal;">跨年抽奖活动</div>
<div class="t" style="left:583px;top:799.5px;font-size:12px;line-height:20px;color:#495166;font-weight:normal;">积分抽奖</div>
<div class="t" style="left:719px;top:799.5px;font-size:12px;line-height:20px;color:#495166;font-weight:normal;">积分</div>
<div class="t" style="left:856px;top:799.5px;font-size:12px;line-height:20px;color:#495166;font-weight:normal;">积分<span style="display:inline-block;width:12px;padding-left:2px">:</span>10.00</div>
<div class="t" style="left:993px;top:799.5px;font-size:12px;line-height:20px;color:#495166;font-weight:normal;">已领取</div>
<div class="t" style="left:1345px;top:799.5px;font-size:12px;line-height:20px;color:#2d8cf0;font-weight:normal;">备注</div>
<div class="a" style="left:266px;top:886px;width:1211px;height:1px;background:#e8eaec"></div>
<div class="a" style="left:347px;top:850px;width:12px;height:12px;background:#e2edfb"></div>
<div class="a" style="left:359px;top:850px;width:12px;height:12px;background:#ddeafb"></div>
<div class="a" style="left:371px;top:850px;width:12px;height:12px;background:#d2e4fa"></div>
<div class="a" style="left:383px;top:850px;width:12px;height:12px;background:#f3f8fe"></div>
<div class="a" style="left:347px;top:862px;width:12px;height:12px;background:#eaf2fd"></div>
<div class="a" style="left:359px;top:862px;width:12px;height:12px;background:#ddeafb"></div>
<div class="a" style="left:371px;top:862px;width:12px;height:12px;background:#dceafa"></div>
<div class="a" style="left:383px;top:862px;width:12px;height:12px;background:#f1f6fe"></div>
<div class="t" style="left:282px;top:852.0px;font-size:12px;line-height:20px;color:#495166;font-weight:normal;">37</div>
<div class="t" style="left:447px;top:852.0px;font-size:12px;line-height:20px;color:#495166;font-weight:normal;">十月积分抽奖</div>
<div class="t" style="left:583px;top:852.0px;font-size:12px;line-height:20px;color:#495166;font-weight:normal;">积分抽奖</div>
<div class="t" style="left:719px;top:852.0px;font-size:12px;line-height:20px;color:#495166;font-weight:normal;">积分</div>
<div class="t" style="left:856px;top:852.0px;font-size:12px;line-height:20px;color:#495166;font-weight:normal;">积分<span style="display:inline-block;width:12px;padding-left:2px">:</span>200.00</div>
<div class="t" style="left:993px;top:852.0px;font-size:12px;line-height:20px;color:#495166;font-weight:normal;">已领取</div>
<div class="t" style="left:1345px;top:852.0px;font-size:12px;line-height:20px;color:#2d8cf0;font-weight:normal;">备注</div>
<div class="a" style="left:266px;top:934px;width:1211px;height:1px;background:#e8eaec"></div>
<div class="a" style="left:347px;top:898px;width:12px;height:12px;background:#f0f5fd"></div>
<div class="a" style="left:359px;top:898px;width:12px;height:12px;background:#dde9fa"></div>
<div class="a" style="left:371px;top:898px;width:12px;height:12px;background:#dde9fa"></div>
<div class="a" style="left:383px;top:898px;width:12px;height:12px;background:#f2f1f6"></div>
<div class="a" style="left:395px;top:898px;width:12px;height:12px;background:#f9dcd6"></div>
<div class="a" style="left:407px;top:898px;width:12px;height:12px;background:#fae7e2"></div>
<div class="a" style="left:419px;top:898px;width:12px;height:12px;background:#f8d3cb"></div>
<div class="a" style="left:431px;top:898px;width:8px;height:12px;background:#fdf7f5"></div>
<div class="a" style="left:347px;top:910px;width:12px;height:12px;background:#edf3fd"></div>
<div class="a" style="left:359px;top:910px;width:12px;height:12px;background:#e4ecfa"></div>
<div class="a" style="left:371px;top:910px;width:12px;height:12px;background:#deebfb"></div>
<div class="a" style="left:383px;top:910px;width:12px;height:12px;background:#f2f0f5"></div>
<div class="a" style="left:395px;top:910px;width:12px;height:12px;background:#fbebe6"></div>
<div class="a" style="left:407px;top:910px;width:12px;height:12px;background:#f9e0da"></div>
<div class="a" style="left:419px;top:910px;width:12px;height:12px;background:#f9dfda"></div>
<div class="a" style="left:431px;top:910px;width:8px;height:12px;background:#fdf8f6"></div>
<div class="t" style="left:282px;top:900.0px;font-size:12px;line-height:20px;color:#495166;font-weight:normal;">34</div>
<div class="t" style="left:447px;top:900.0px;font-size:12px;line-height:20px;color:#495166;font-weight:normal;">十月积分抽奖</div>
<div class="t" style="left:583px;top:900.0px;font-size:12px;line-height:20px;color:#495166;font-weight:normal;">积分抽奖</div>
<div class="t" style="left:719px;top:900.0px;font-size:12px;line-height:20px;color:#495166;font-weight:normal;">积分</div>
<div class="t" style="left:856px;top:900.0px;font-size:12px;line-height:20px;color:#495166;font-weight:normal;">积分<span style="display:inline-block;width:12px;padding-left:2px">:</span>200.00</div>
<div class="t" style="left:993px;top:900.0px;font-size:12px;line-height:20px;color:#495166;font-weight:normal;">已领取</div>
<div class="t" style="left:1345px;top:900.0px;font-size:12px;line-height:20px;color:#2d8cf0;font-weight:normal;">备注</div>
<div class="a" style="left:343px;top:334px;width:96px;height:12px;background:#fcfcfd"></div>
<div class="a" style="left:343px;top:382px;width:96px;height:12px;background:#f8fafd"></div>
<div class="a" style="left:343px;top:430px;width:96px;height:12px;background:#f6f9fd"></div>
<div class="a" style="left:343px;top:478px;width:96px;height:12px;background:#fcfcfd"></div>
<div class="a" style="left:343px;top:526px;width:96px;height:12px;background:#fcfcfd"></div>
<div class="a" style="left:343px;top:586px;width:96px;height:12px;background:#fcfcfd"></div>
<div class="a" style="left:343px;top:634px;width:96px;height:12px;background:#fcfcfd"></div>
<div class="a" style="left:343px;top:682px;width:96px;height:12px;background:#fcfcfd"></div>
<div class="a" style="left:343px;top:730px;width:96px;height:12px;background:#fcfcfd"></div>
<div class="a" style="left:343px;top:778px;width:96px;height:12px;background:#fcfcfd"></div>
<div class="a" style="left:343px;top:838px;width:96px;height:12px;background:#fcfcfd"></div>
<div class="a" style="left:343px;top:886px;width:96px;height:12px;background:#fcfcfd"></div>
<div class="a" style="left:1508px;top:0;width:17px;height:930px;background:#f1f1f1"></div>
<div class="a" style="left:1510px;top:17px;width:13px;height:688px;background:#c1c1c1"></div>
<svg class="a" style="left:1508px;top:0" width="17" height="17" viewBox="0 0 17 17"><path d="M4.5 10.5h8L8.5 6.5z" fill="#a3a3a3"/></svg>
<svg class="a" style="left:1508px;top:913px" width="17" height="17" viewBox="0 0 17 17"><path d="M4.5 6.5h8L8.5 10.5z" fill="#505050"/></svg>
</body></html>
